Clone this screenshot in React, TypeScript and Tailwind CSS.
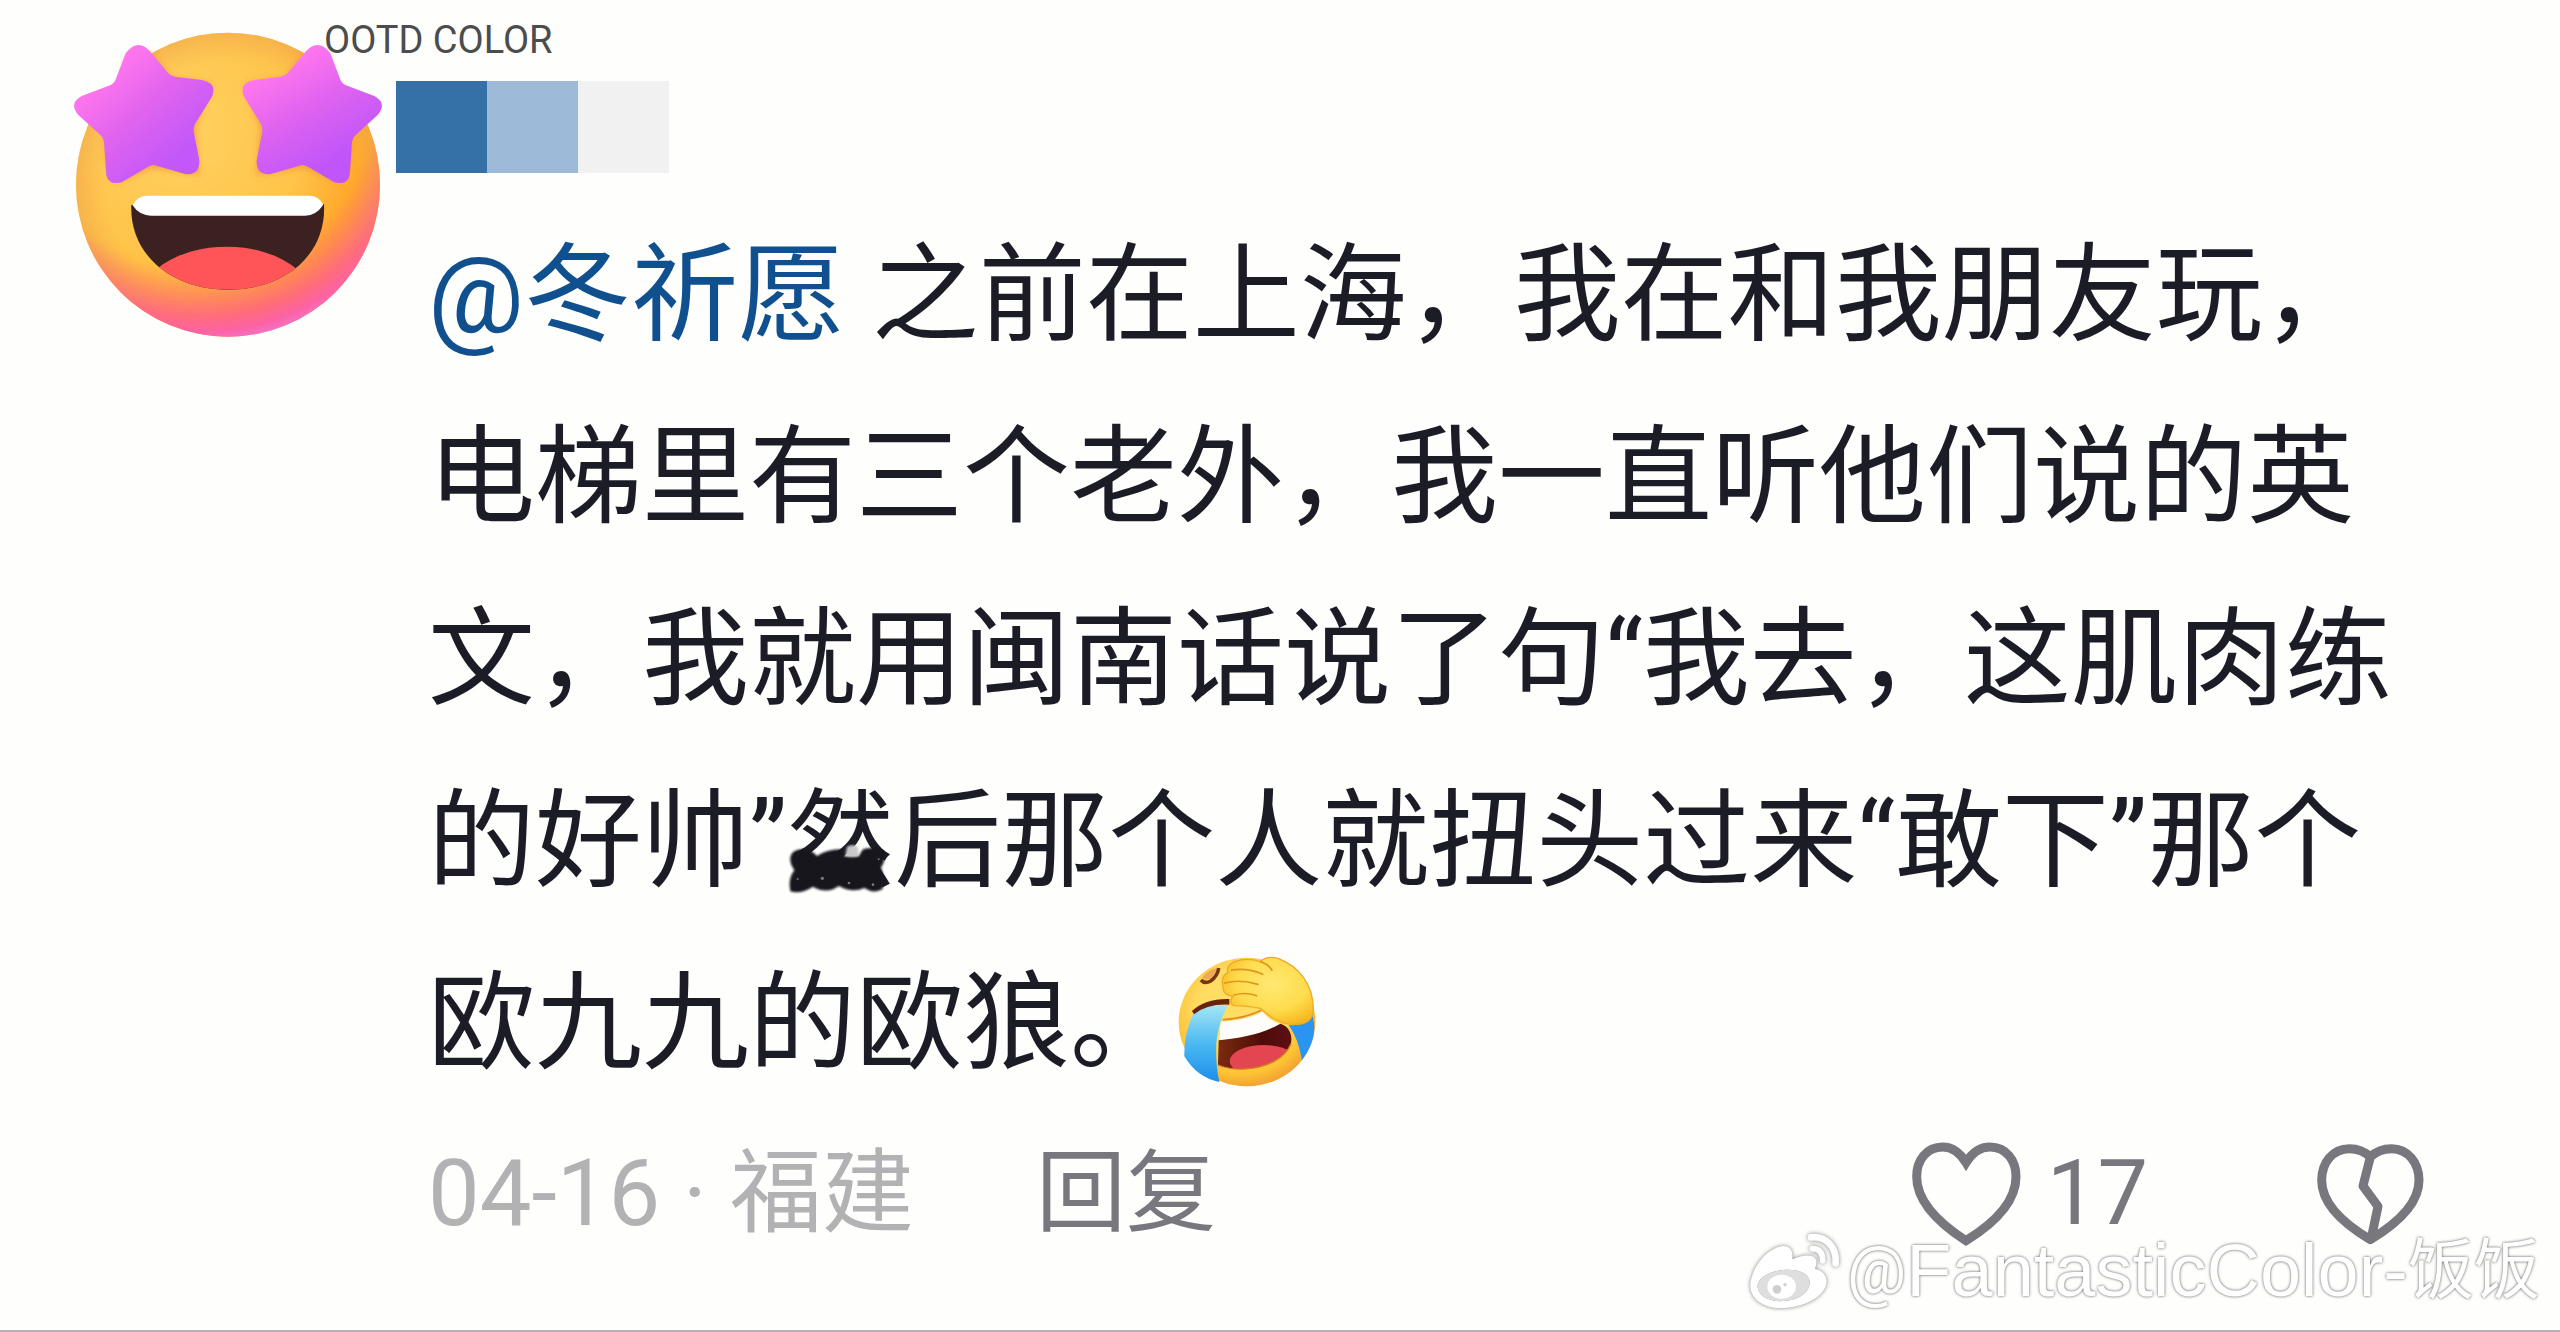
import React from 'react';

const STAR =
  'M197 100 Q235 50 275 100 L325 160 Q332 168 345 170 L425 180 Q475 190 455 232 L405 312 Q399 325 402 340 L418 420 Q420 468 375 462 L290 437 Q277 432 262 442 L185 487 Q140 498 138 455 L132 365 Q130 352 120 344 L55 285 Q25 250 65 228 L150 196 Q163 190 168 176 Z';

function StarEyesAvatar() {
  return (
    <svg viewBox="36 30 936 930" className="relative z-10 h-[310px] w-[312px] shrink-0" role="img" aria-label="avatar">
      <defs>
        <radialGradient id="face" gradientUnits="userSpaceOnUse" cx="350" cy="330" r="760">
          <stop offset="0" stopColor="#ffd261" />
          <stop offset="0.5" stopColor="#ffc44a" />
          <stop offset="0.76" stopColor="#ffa525" />
          <stop offset="1" stopColor="#ff8a48" />
        </radialGradient>
        <radialGradient id="glow" gradientUnits="userSpaceOnUse" cx="420" cy="230" r="750">
          <stop offset="0.7" stopColor="#ff6a80" stopOpacity="0" />
          <stop offset="0.88" stopColor="#ff6288" stopOpacity="0.85" />
          <stop offset="0.94" stopColor="#fd62a4" />
          <stop offset="1" stopColor="#ee7ad6" />
        </radialGradient>
        <radialGradient id="rim" gradientUnits="userSpaceOnUse" cx="504" cy="494" r="456">
          <stop offset="0.8" stopColor="#f5ae4e" stopOpacity="0" />
          <stop offset="1" stopColor="#f0a94e" stopOpacity="0.6" />
        </radialGradient>
        <linearGradient id="starL" gradientUnits="userSpaceOnUse" x1="150" y1="150" x2="370" y2="400">
          <stop offset="0" stopColor="#ff76ee" />
          <stop offset="0.45" stopColor="#e164ee" />
          <stop offset="1" stopColor="#c257fa" />
        </linearGradient>
        <linearGradient id="starR" gradientUnits="userSpaceOnUse" x1="640" y1="150" x2="800" y2="430">
          <stop offset="0" stopColor="#ff76ee" />
          <stop offset="0.5" stopColor="#dd62f0" />
          <stop offset="1" stopColor="#c056fa" />
        </linearGradient>
        <linearGradient id="tongue" x1="0" y1="0" x2="0" y2="1">
          <stop offset="0.4" stopColor="#ff5558" />
          <stop offset="0.7" stopColor="#dc3c3c" />
        </linearGradient>
        <clipPath id="mouth">
          <path d="M214 555 C208 700 330 809 504 809 C680 809 800 700 792 552Z" />
        </clipPath>
        <filter id="soft" x="-20%" y="-20%" width="140%" height="140%">
          <feGaussianBlur stdDeviation="9" />
        </filter>
      </defs>
      <circle cx="504" cy="494" r="456" fill="url(#face)" />
      <circle cx="504" cy="494" r="456" fill="url(#rim)" />
      <circle cx="504" cy="494" r="456" fill="url(#glow)" />
      <g fill="#e98a3a" opacity="0.6" filter="url(#soft)">
        <path d="M200 110 L275 100 L330 170 L455 190 L408 325 L420 465 L275 445 L170 490 L140 420 L135 350Z" />
        <path d="M808 110 L733 100 L678 170 L553 190 L600 325 L588 465 L733 445 L838 490 L868 420 L873 350Z" />
      </g>
      <path d={STAR} fill="url(#starL)" />
      <path
        d="M811 100 Q773 50 733 100 L683 160 Q676 168 663 170 L583 180 Q533 190 553 232 L603 312 Q609 325 606 340 L590 420 Q588 468 633 462 L718 437 Q731 432 746 442 L823 487 Q868 498 870 455 L876 365 Q878 352 888 344 L953 285 Q983 250 943 228 L858 196 Q845 190 840 176 Z"
        fill="url(#starR)"
      />
      <path d="M214 555 C208 700 330 809 504 809 C680 809 800 700 792 552Z" fill="#3b2120" />
      <g clipPath="url(#mouth)">
        <ellipse cx="500" cy="860" rx="270" ry="180" fill="url(#tongue)" />
      </g>
      <path d="M218 556 Q232 527 262 527 H748 Q776 527 790 554 Q768 587 735 587 H272 Q236 585 218 556Z" fill="#fff" />
    </svg>
  );
}

function FacepalmEmoji() {
  return (
    <svg viewBox="75 65 420 393" className="mb-5 inline-block h-[131px] w-[140px] align-middle" role="img" aria-label="笑哭捂脸">
      <defs>
        <radialGradient id="fp" cx="0.45" cy="0.4" r="0.6">
          <stop offset="0.5" stopColor="#ffdd62" />
          <stop offset="0.85" stopColor="#fcc234" />
          <stop offset="1" stopColor="#f3a431" />
        </radialGradient>
        <linearGradient id="tear" x1="0" y1="0" x2="0" y2="1">
          <stop offset="0" stopColor="#a6e6f5" />
          <stop offset="0.5" stopColor="#4cb9f2" />
          <stop offset="1" stopColor="#1a8eea" />
        </linearGradient>
        <radialGradient id="hand" cx="0.55" cy="0.4" r="0.65">
          <stop offset="0" stopColor="#ffe873" />
          <stop offset="0.6" stopColor="#ffdc4e" />
          <stop offset="1" stopColor="#f6b61d" />
        </radialGradient>
        <linearGradient id="cavity" x1="0" y1="0" x2="1" y2="0">
          <stop offset="0" stopColor="#7c2b10" />
          <stop offset="0.6" stopColor="#4d0c0a" />
          <stop offset="1" stopColor="#5d0f12" />
        </linearGradient>
        <clipPath id="cav">
          <path d="M200 318 C270 310 330 300 385 268 C410 275 422 300 417 325 C400 375 340 402 275 404 Q225 404 198 392Z" />
        </clipPath>
      </defs>
      <ellipse cx="285" cy="263" rx="205" ry="193" fill="url(#fp)" />
      <path d="M147 137 Q158 150 176 140 Q196 126 200 101" fill="none" stroke="#773512" strokeWidth="11" />
      <path d="M150 131 Q165 108 194 102 Q192 124 172 134 Q160 138 150 131Z" fill="#ecaa56" />
      <path d="M206 262 Q285 258 332 232 Q350 258 385 270 Q310 310 202 318Z" fill="#fffdfc" />
      <path d="M212 256 Q280 252 328 228" fill="none" stroke="#df8b28" strokeWidth="5" />
      <path d="M200 318 C270 310 330 300 385 268 C410 275 422 300 417 325 C400 375 340 402 275 404 Q225 404 198 392Z" fill="url(#cavity)" />
      <g clipPath="url(#cav)">
        <ellipse cx="335" cy="380" rx="102" ry="48" fill="#e44651" />
      </g>
      <path d="M198 392 Q230 406 275 404 C345 402 400 370 417 328" fill="none" stroke="#d97a1e" strokeWidth="4" />
      <path d="M124 237 Q165 208 228 212 Q200 260 193 325 Q190 390 202 443 Q135 430 97 366 Q95 300 124 237Z" fill="url(#tear)" />
      <path d="M120 230 Q160 192 232 194 L232 211 Q165 208 126 240Z" fill="#672312" />
      <path d="M410 272 Q450 278 482 246 Q500 310 450 378 Q440 315 410 272Z" fill="#2a95f0" />
      <path
        d="M325 82 Q345 63 378 72 C440 95 484 150 484 225 Q483 272 425 270 C380 270 350 245 325 222 Q290 215 245 214 Q228 204 243 186 Q212 182 213 158 Q205 125 228 115 Q220 95 248 82 Q285 68 325 82Z"
        fill="url(#hand)"
        stroke="#efa92a"
        strokeWidth="4"
      />
      <g fill="none" stroke="#df9522" strokeWidth="5" strokeLinecap="round">
        <path d="M238 107 Q290 100 332 120" />
        <path d="M218 146 Q265 134 318 150" />
        <path d="M246 182 Q280 172 314 184" />
        <path d="M325 82 Q350 90 360 108" />
      </g>
    </svg>
  );
}

function Scribble() {
  return (
    <svg viewBox="90 240 300 150" className="absolute left-0 top-[56px] h-[50px] w-[100px]" aria-hidden="true">
      <defs>
        <filter id="smudge" x="-20%" y="-20%" width="140%" height="140%">
          <feGaussianBlur stdDeviation="3" />
        </filter>
      </defs>
      <path
        d="M100 280 Q105 255 140 256 Q165 258 180 276 Q210 256 250 256 L262 276 H305 L318 256 Q355 244 380 265 Q388 290 372 310 Q385 345 376 376 Q350 390 322 372 Q285 388 245 366 Q210 392 168 368 Q130 392 100 382 Q92 345 112 318 Q98 300 100 280Z"
        fill="#17171f"
        filter="url(#smudge)"
      />
      <path d="M270 248 Q287 240 303 248 L305 276 Q285 282 265 276Z" fill="#c9c9c9" filter="url(#smudge)" />
      <g fill="#77777d">
        <circle cx="122" cy="345" r="3" />
        <circle cx="196" cy="343" r="5" />
        <circle cx="276" cy="357" r="4" />
        <circle cx="348" cy="362" r="4" />
        <circle cx="365" cy="286" r="3" />
      </g>
    </svg>
  );
}

function HeartIcon() {
  return (
    <svg viewBox="30 45 339 324" className="h-[108px] w-[113px]" fill="none" stroke="#77777d" strokeWidth="27" aria-hidden="true">
      <path d="M198 113 C178 80 152 66 128 66 C80 66 50 105 50 155 C50 225 110 290 198 347 C290 290 348 225 348 155 C348 105 318 66 270 66 C245 66 218 80 198 113Z" />
    </svg>
  );
}

function BrokenHeartIcon() {
  return (
    <svg viewBox="42 50 333 312" className="h-[104px] w-[111px]" fill="none" stroke="#77777d" strokeWidth="27" strokeLinejoin="round" aria-hidden="true">
      <path d="M208 95 C190 77 165 70 145 70 C95 70 62 112 62 165 C62 225 110 285 208 343 C305 285 354 225 354 165 C354 112 320 70 272 70 C248 70 225 78 208 95 L186 182 L231 243 L210 343" />
    </svg>
  );
}

function WeiboMark() {
  return (
    <svg viewBox="42 50 294 246" className="h-[82px] w-[98px] drop-shadow-[0_0_2px_rgba(0,0,0,0.5)]" aria-hidden="true">
      <path
        fillRule="evenodd"
        d="M58 210 C66 155 110 105 155 98 Q188 96 184 138 Q225 120 247 130 Q262 140 252 166 Q286 174 287 205 C284 250 215 284 150 284 C95 284 55 255 58 210Z M80 222 C86 256 125 266 160 263 C205 260 238 235 236 205 C232 176 195 166 155 170 C112 175 78 195 80 222Z"
        fill="#fff"
      />
      <path d="M80 222 C86 256 125 266 160 263 C205 260 238 235 236 205 C232 176 195 166 155 170 C112 175 78 195 80 222Z" fill="#dedede" />
      <ellipse cx="152" cy="220" rx="43" ry="36" fill="#fff" />
      <circle cx="138" cy="228" r="13" fill="#cfcfcf" />
      <circle cx="162" cy="214" r="5" fill="#cfcfcf" />
      <g fill="none" stroke="#fff" strokeLinecap="round">
        <path d="M240 72 C285 68 318 100 314 150" strokeWidth="20" />
        <path d="M244 106 Q275 106 275 142" strokeWidth="17" />
      </g>
    </svg>
  );
}

export default function App() {
  return (
    <main className="relative flex min-h-screen flex-col overflow-hidden border-b-2 border-[#b4b4b4] bg-[#fefefd] font-['Roboto','Noto_Sans_CJK_SC',sans-serif] text-[#1b1c26]">
      <header className="flex h-[205px] items-start pl-[72px] pt-[30px]">
        <StarEyesAvatar />
        <div className="-mt-[14px]">
          <h1 className="-ml-[60px] text-[38px] leading-[48px] text-[#4c4c4c]">OOTD COLOR</h1>
          <div className="ml-3 mt-[17px] flex h-[92px]">
            <div className="w-[91px] bg-[#3571a7]" />
            <div className="w-[91px] bg-[#9ebad9]" />
            <div className="w-[91px] bg-[#f1f1f1]" />
          </div>
        </div>
      </header>

      <article className="pl-[428px]">
        <p className="whitespace-nowrap text-[107px] leading-[182px]">
          <a href="#user" className="text-[#10508f]">@冬祈愿</a> 之前在上海，我在和我朋友玩，
          <br />
          电梯里有三个老外，我一直听他们说的英
          <br />
          文，我就用闽南话说了句“我去，这肌肉练
          <br />
          的好帅”
          <span className="relative inline-block leading-none">
            然
            <Scribble />
          </span>
          后那个人就扭头过来“敢下”那个
          <br />
          欧九九的欧狼。
          <FacepalmEmoji />
        </p>

        <footer className="flex h-[158px] items-center pr-[134px] text-[90px] leading-none text-[#77777d]">
          <span className="text-[92px] text-[#b2b2b4]">04-16 · 福建</span>
          <button type="button" className="ml-[122px]">回复</button>
          <button type="button" className="ml-auto flex items-center gap-6" aria-label="赞 17">
            <HeartIcon />
            <span>17</span>
          </button>
          <button type="button" className="ml-[167px]" aria-label="踩">
            <BrokenHeartIcon />
          </button>
        </footer>
      </article>

      <div className="absolute bottom-[18px] right-[20px] flex items-center leading-none text-white [text-shadow:0_0_3px_rgba(0,0,0,0.7)]">
        <WeiboMark />
        <span className="ml-1 text-[66px]">@</span>
        <span className="font-['Liberation_Sans',sans-serif] text-[74px]">FantasticColor-</span>
        <span className="text-[66px]">饭饭</span>
      </div>
    </main>
  );
}
